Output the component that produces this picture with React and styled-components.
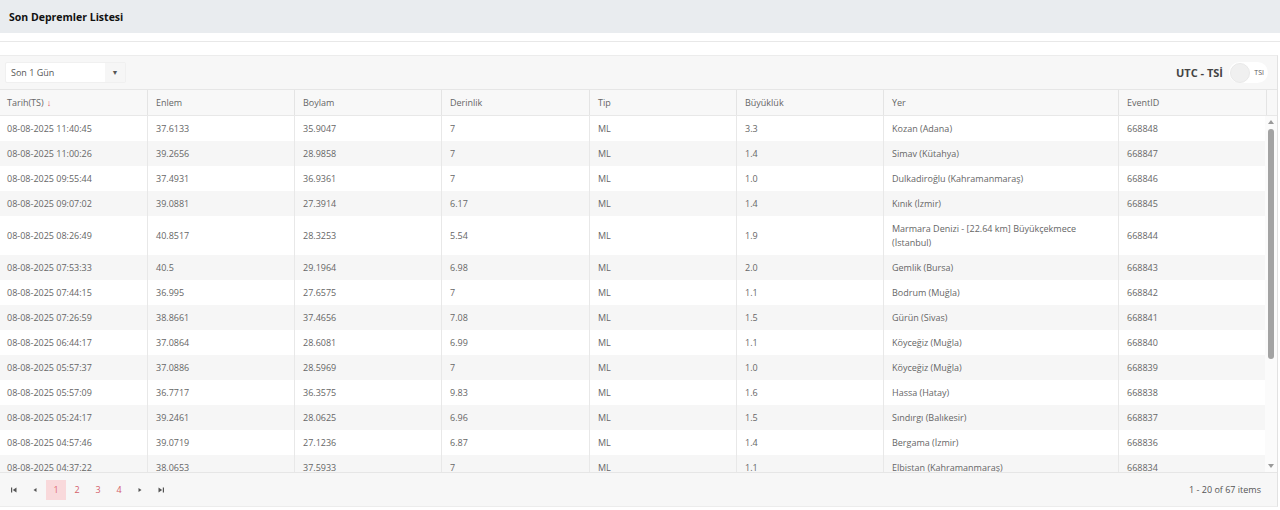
import React from "react";
import styled, { createGlobalStyle } from "styled-components";

const GlobalStyle = createGlobalStyle`
  html, body { margin: 0; padding: 0; background: #fff; }
  body { font-family: "Open Sans", "Noto Sans", sans-serif; }
  * { box-sizing: border-box; }
`;

const COLS = "147px 147px 147px 148px 147px 147px 235px 148px";

const Page = styled.div`
  display: flex;
  flex-direction: column;
  width: 1280px;
`;

const TitleBar = styled.div`
  height: 33px;
  background: #e9ecef;
  display: flex;
  align-items: center;
  padding-left: 9px;
  font-size: 10.5px;
  font-weight: 700;
  color: #111;
`;

const Gap = styled.div`
  height: 22px;
  background: linear-gradient(#fff 0 8px, #e8e8e8 8px 9px, #fff 9px);
`;

const Grid = styled.div`
  display: flex;
  flex-direction: column;
  width: 1278px;
  border: 1px solid #ececec;
  border-left: none;
  border-right-color: #e2e2e2;
`;

const Toolbar = styled.div`
  height: 34px;
  background: #f7f7f7;
  display: flex;
  align-items: center;
  justify-content: space-between;
  padding: 0 9px 0 5px;
  border-bottom: 1px solid #e6e6e6;
`;

const Select = styled.div`
  width: 121px;
  height: 21px;
  display: flex;
  background: #fff;
  border: 1px solid #f0f0f0;
  border-radius: 2px;
  font-size: 9px;
  color: #555;
`;

const SelectText = styled.div`
  flex: 1;
  display: flex;
  align-items: center;
  padding-left: 5px;
`;

const SelectBtn = styled.div`
  width: 20px;
  display: flex;
  align-items: center;
  justify-content: center;
  background: #f6f6f6;
  font-size: 7px;
  color: #555;
`;

const ToggleWrap = styled.div`
  display: flex;
  align-items: center;
  gap: 6px;
`;

const ToggleLabel = styled.span`
  font-size: 11px;
  font-weight: 700;
  color: #444;
`;

const Switch = styled.div`
  width: 39px;
  height: 21px;
  border-radius: 11px;
  background: #fff;
  display: flex;
  align-items: center;
  justify-content: space-between;
  padding: 0 4px 0 1px;
`;

const Knob = styled.div`
  width: 20px;
  height: 20px;
  border-radius: 50%;
  background: #f0f0f0;
  border: 1px solid #e9e9e9;
`;

const SwitchText = styled.span`
  font-size: 7px;
  color: #555;
`;

const HeaderRow = styled.div`
  display: grid;
  grid-template-columns: ${COLS} 1fr;
  height: 26px;
  background: #f8f8f8;
  border-bottom: 1px solid #e8e8e8;
`;

const HeadCell = styled.div`
  display: flex;
  align-items: center;
  padding-left: ${(p) => (p.$first ? "7px" : "8px")};
  font-size: 9px;
  color: #666;
  border-left: ${(p) => (p.$first ? "none" : "1px solid #e4e4e4")};
`;

const SortArrow = styled.span`
  color: #e0525c;
  margin-left: 3px;
  font-size: 9px;
`;

const BodyWrap = styled.div`
  display: flex;
  height: 356px;
`;

const Rows = styled.div`
  flex: 1;
  overflow: hidden;
  display: flex;
  flex-direction: column;
`;

const Row = styled.div`
  display: grid;
  grid-template-columns: ${COLS};
  flex-shrink: 0;
  background: ${(p) => (p.$alt ? "#f6f6f6" : "#fff")};
`;

const Cell = styled.div`
  display: flex;
  align-items: center;
  padding: 5.5px 8px 5.5px ${(p) => (p.$first ? "7px" : "8px")};
  font-size: 9px;
  line-height: 14px;
  color: #666;
  border-left: ${(p) => (p.$first ? "none" : "1px solid #e8e8e8")};
`;

const ScrollBar = styled.div`
  width: 12px;
  display: flex;
  flex-direction: column;
  align-items: center;
  background: #fbfbfb;
  padding: 4px 0 4px;
`;

const ScrollArrow = styled.div`
  width: 0;
  height: 0;
  border-left: 3.5px solid transparent;
  border-right: 3.5px solid transparent;
  ${(p) =>
    p.$up
      ? "border-bottom: 4px solid #9a9a9a;"
      : "border-top: 4px solid #9a9a9a;"}
`;

const Track = styled.div`
  flex: 1;
  width: 100%;
  display: flex;
  justify-content: center;
  padding-top: 5px;
`;

const Thumb = styled.div`
  width: 6px;
  height: 230px;
  border-radius: 3px;
  background: #a3a3a3;
`;

const Pager = styled.div`
  height: 34px;
  background: #f7f7f7;
  border-top: 1px solid #e6e6e6;
  display: flex;
  align-items: center;
  justify-content: space-between;
  padding: 0 16px 0 4px;
`;

const PagerNav = styled.div`
  display: flex;
  align-items: center;
  gap: 1px;
`;

const PageBtn = styled.div`
  width: 20px;
  height: 20px;
  display: flex;
  align-items: center;
  justify-content: center;
  font-size: 9px;
  line-height: 20px;
  color: ${(p) => (p.$active ? "#e06d77" : "#d4606b")};
  background: ${(p) => (p.$active ? "#f9d9db" : "transparent")};
`;

const PagerInfo = styled.div`
  font-size: 9px;
  color: #555;
`;

const NavIcon = ({ type }) => {
  const c = "#555";
  return (
    <PageBtn>
      <svg width="8" height="8" viewBox="0 0 8 8">
        {type === "first" && (
          <>
            <rect x="1" y="1.5" width="1.2" height="5" fill={c} />
            <polygon points="6.5,1.5 6.5,6.5 2.8,4" fill={c} />
          </>
        )}
        {type === "prev" && <polygon points="5.5,2 5.5,6 2.5,4" fill={c} />}
        {type === "next" && <polygon points="2.5,2 2.5,6 5.5,4" fill={c} />}
        {type === "last" && (
          <>
            <polygon points="1.5,1.5 1.5,6.5 5.2,4" fill={c} />
            <rect x="5.8" y="1.5" width="1.2" height="5" fill={c} />
          </>
        )}
      </svg>
    </PageBtn>
  );
};

const data = [
  ["08-08-2025 11:40:45", "37.6133", "35.9047", "7", "ML", "3.3", "Kozan (Adana)", "668848"],
  ["08-08-2025 11:00:26", "39.2656", "28.9858", "7", "ML", "1.4", "Simav (Kütahya)", "668847"],
  ["08-08-2025 09:55:44", "37.4931", "36.9361", "7", "ML", "1.0", "Dulkadiroğlu (Kahramanmaraş)", "668846"],
  ["08-08-2025 09:07:02", "39.0881", "27.3914", "6.17", "ML", "1.4", "Kınık (İzmir)", "668845"],
  ["08-08-2025 08:26:49", "40.8517", "28.3253", "5.54", "ML", "1.9", "Marmara Denizi - [22.64 km] Büyükçekmece (İstanbul)", "668844"],
  ["08-08-2025 07:53:33", "40.5", "29.1964", "6.98", "ML", "2.0", "Gemlik (Bursa)", "668843"],
  ["08-08-2025 07:44:15", "36.995", "27.6575", "7", "ML", "1.1", "Bodrum (Muğla)", "668842"],
  ["08-08-2025 07:26:59", "38.8661", "37.4656", "7.08", "ML", "1.5", "Gürün (Sivas)", "668841"],
  ["08-08-2025 06:44:17", "37.0864", "28.6081", "6.99", "ML", "1.1", "Köyceğiz (Muğla)", "668840"],
  ["08-08-2025 05:57:37", "37.0886", "28.5969", "7", "ML", "1.0", "Köyceğiz (Muğla)", "668839"],
  ["08-08-2025 05:57:09", "36.7717", "36.3575", "9.83", "ML", "1.6", "Hassa (Hatay)", "668838"],
  ["08-08-2025 05:24:17", "39.2461", "28.0625", "6.96", "ML", "1.5", "Sındırgı (Balıkesir)", "668837"],
  ["08-08-2025 04:57:46", "39.0719", "27.1236", "6.87", "ML", "1.4", "Bergama (İzmir)", "668836"],
  ["08-08-2025 04:37:22", "38.0653", "37.5933", "7", "ML", "1.1", "Elbistan (Kahramanmaraş)", "668834"],
  ["08-08-2025 04:12:05", "37.2210", "36.1432", "7", "ML", "1.2", "Kahramanmaraş", "668833"],
];

const headers = ["Tarih(TS)", "Enlem", "Boylam", "Derinlik", "Tip", "Büyüklük", "Yer", "EventID"];

export default function App() {
  return (
    <Page>
      <GlobalStyle />
      <TitleBar>Son Depremler Listesi</TitleBar>
      <Gap />
      <Grid>
        <Toolbar>
          <Select>
            <SelectText>Son 1 Gün</SelectText>
            <SelectBtn>▼</SelectBtn>
          </Select>
          <ToggleWrap>
            <ToggleLabel>UTC - TSİ</ToggleLabel>
            <Switch>
              <Knob />
              <SwitchText>TSI</SwitchText>
            </Switch>
          </ToggleWrap>
        </Toolbar>
        <HeaderRow>
          {headers.map((h, i) => (
            <HeadCell key={h} $first={i === 0}>
              {h}
              {i === 0 && <SortArrow>↓</SortArrow>}
            </HeadCell>
          ))}
          <HeadCell />
        </HeaderRow>
        <BodyWrap>
          <Rows>
            {data.map((r, ri) => (
              <Row key={ri} $alt={ri % 2 === 1}>
                {r.map((c, ci) => (
                  <Cell key={ci} $first={ci === 0}>
                    {c}
                  </Cell>
                ))}
              </Row>
            ))}
          </Rows>
          <ScrollBar>
            <ScrollArrow $up />
            <Track>
              <Thumb />
            </Track>
            <ScrollArrow />
          </ScrollBar>
        </BodyWrap>
        <Pager>
          <PagerNav>
            <NavIcon type="first" />
            <NavIcon type="prev" />
            <PageBtn $active>1</PageBtn>
            <PageBtn>2</PageBtn>
            <PageBtn>3</PageBtn>
            <PageBtn>4</PageBtn>
            <NavIcon type="next" />
            <NavIcon type="last" />
          </PagerNav>
          <PagerInfo>1 - 20 of 67 items</PagerInfo>
        </Pager>
      </Grid>
    </Page>
  );
}
